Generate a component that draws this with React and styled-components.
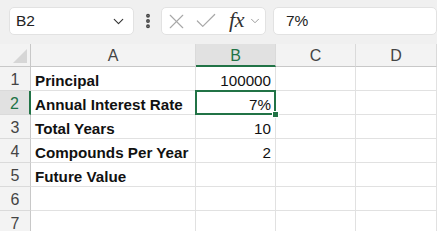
import React from 'react';
import styled, { createGlobalStyle } from 'styled-components';
import { ChevronDown, EllipsisVertical, X, Check } from 'lucide-react';

const GlobalStyle = createGlobalStyle`
  html, body {
    margin: 0;
    padding: 0;
    background: #ffffff;
    font-family: 'Liberation Sans', Arial, sans-serif;
    overflow: hidden;
  }
`;

const Wrapper = styled.div`
  width: 437px;
  height: 231px;
  overflow: hidden;
  background: #ffffff;
`;

const Toolbar = styled.div`
  height: 44px;
  background: #f0f0f0;
  display: flex;
  align-items: center;
  padding: 0 0 2px 9px;
  box-sizing: border-box;
`;

const Box = styled.div`
  height: 28px;
  box-sizing: border-box;
  background: #ffffff;
  border: 1px solid #e2e2e2;
  border-radius: 5px;
  display: flex;
  align-items: center;
  width: ${p => p.$width || 'auto'};
  flex: ${p => (p.$grow ? 1 : 'none')};
  padding: ${p => p.$pad || '0'};
`;

const NameText = styled.span`
  font-size: 15.5px;
  color: #222;
  flex: 1;
`;

const Dots = styled.div`
  width: 27px;
  display: flex;
  justify-content: center;
  color: #444;
`;

const FxText = styled.span`
  font-family: 'Liberation Serif', 'Times New Roman', serif;
  font-style: italic;
  font-size: 22px;
  color: #333;
  margin: -3px 4px 0 10px;
  letter-spacing: -0.3px;
`;

const FormulaText = styled.span`
  font-size: 15.5px;
  color: #222;
`;

const Gap = styled.div`
  width: ${p => p.$w}px;
  flex: none;
`;

const Grid = styled.div`
  display: grid;
  grid-template-columns: 31px 165px 80px 80px 81px;
  grid-template-rows: 23px repeat(7, 24px);
`;

const Corner = styled.div`
  background: #f3f3f3;
  border-right: 1px solid #c8c8c8;
  border-bottom: 1px solid #c8c8c8;
  box-sizing: border-box;
  display: flex;
  align-items: flex-end;
  justify-content: flex-end;
  padding: 0 3px 3px 0;
`;

const ColHead = styled.div`
  box-sizing: border-box;
  background: ${p => (p.$active ? '#e1e1e1' : '#f3f3f3')};
  color: ${p => (p.$active ? '#217346' : '#444')};
  border-right: 1px solid #dadada;
  border-bottom: ${p => (p.$active ? '2px solid #217346' : '1px solid #c8c8c8')};
  font-size: 16px;
  display: flex;
  align-items: center;
  justify-content: center;
  padding-top: 2px;
`;

const RowHead = styled.div`
  box-sizing: border-box;
  background: ${p => (p.$active ? '#e1e1e1' : '#f3f3f3')};
  color: ${p => (p.$active ? '#217346' : '#444')};
  border-right: ${p => (p.$active ? '2px solid #217346' : '1px solid #c8c8c8')};
  border-bottom: 1px solid #dadada;
  font-size: 16px;
  display: flex;
  align-items: center;
  justify-content: center;
  padding-top: 2px;
`;

const Cell = styled.div`
  position: relative;
  box-sizing: border-box;
  border-right: 1px solid #e1e1e1;
  border-bottom: 1px solid #e1e1e1;
  font-size: 15.2px;
  font-weight: ${p => (p.$bold ? 700 : 400)};
  color: #111;
  display: flex;
  align-items: center;
  justify-content: ${p => (p.$right ? 'flex-end' : 'flex-start')};
  padding: 3px 4px 0 4px;
  white-space: nowrap;

  ${p => p.$selected && `
    &::after {
      content: '';
      position: absolute;
      left: -1px;
      top: -1px;
      right: -1px;
      bottom: -1px;
      border: 2px solid #217346;
    }
    &::before {
      content: '';
      position: absolute;
      right: -4px;
      bottom: -4px;
      width: 5px;
      height: 5px;
      background: #217346;
      border: 1px solid #fff;
      z-index: 2;
    }
  `}
`;

const columns = ['A', 'B', 'C', 'D'];

const rows = [
  { label: 'Principal', value: '100000' },
  { label: 'Annual Interest Rate', value: '7%' },
  { label: 'Total Years', value: '10' },
  { label: 'Compounds Per Year', value: '2' },
  { label: 'Future Value', value: '' },
  { label: '', value: '' },
  { label: '', value: '' },
];

export default function App() {
  return (
    <Wrapper>
      <GlobalStyle />
      <Toolbar>
        <Box $width="125px" $pad="0 6px 0 6px">
          <NameText>B2</NameText>
          <ChevronDown size={17} strokeWidth={1.6} color="#333" />
        </Box>
        <Dots>
          <EllipsisVertical size={18} strokeWidth={3.2} />
        </Dots>
        <Box $width="105px" $pad="0 0 0 2px">
          <X size={25} strokeWidth={1.1} color="#a8a8a8" />
          <Gap $w={4} />
          <Check size={26} strokeWidth={1.1} color="#a8a8a8" />
          <FxText>fx</FxText>
          <ChevronDown size={14} strokeWidth={1.4} color="#888" />
        </Box>
        <Gap $w={7} />
        <Box $grow $pad="0 0 0 12px">
          <FormulaText>7%</FormulaText>
        </Box>
      </Toolbar>
      <Grid>
        <Corner>
          <svg width="14" height="14" viewBox="0 0 14 14">
            <polygon points="14,0 14,14 0,14" fill="#d6d6d6" />
          </svg>
        </Corner>
        {columns.map(c => (
          <ColHead key={c} $active={c === 'B'}>{c}</ColHead>
        ))}
        {rows.map((r, i) => (
          <React.Fragment key={i}>
            <RowHead $active={i === 1}>{i + 1}</RowHead>
            <Cell $bold>{r.label}</Cell>
            <Cell $right $selected={i === 1}>{r.value}</Cell>
            <Cell />
            <Cell />
          </React.Fragment>
        ))}
      </Grid>
    </Wrapper>
  );
}
